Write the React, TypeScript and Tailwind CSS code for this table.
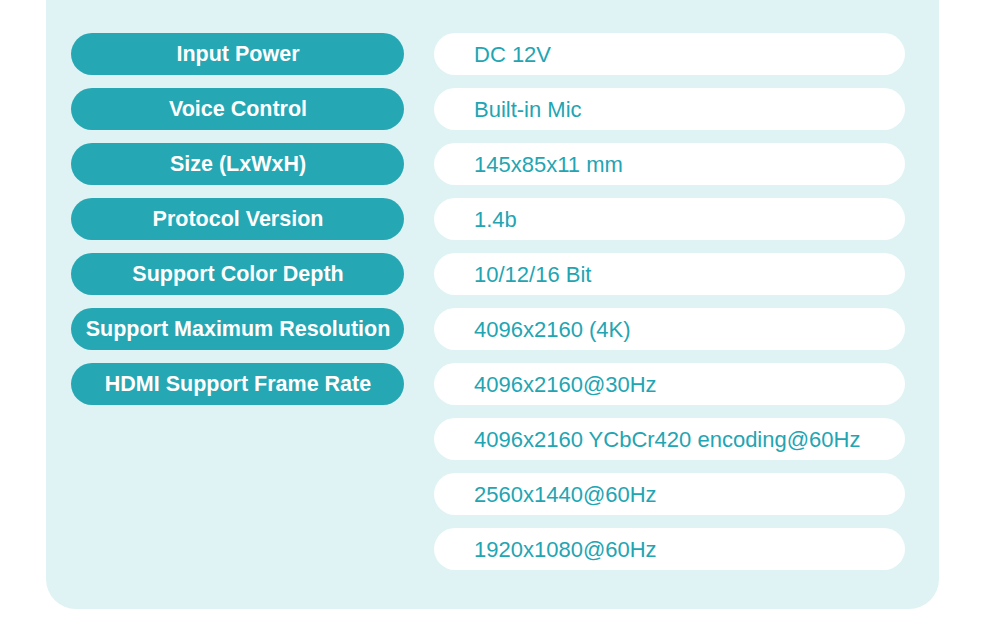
const specs = [
  'Input Power',
  'Voice Control',
  'Size (LxWxH)',
  'Protocol Version',
  'Support Color Depth',
  'Support Maximum Resolution',
  'HDMI Support Frame Rate',
];

const values = [
  'DC 12V',
  'Built-in Mic',
  '145x85x11 mm',
  '1.4b',
  '10/12/16 Bit',
  '4096x2160 (4K)',
  '4096x2160@30Hz',
  '4096x2160 YCbCr420 encoding@60Hz',
  '2560x1440@60Hz',
  '1920x1080@60Hz',
];

export default function App() {
  return (
    <div className="w-[985px] h-[627px] bg-white overflow-hidden" style={{ fontFamily: '"Liberation Sans", Arial, sans-serif' }}>
      <div className="ml-[46px] w-[893px] h-[609px] bg-[#dff3f4] rounded-b-[30px] pt-[33px] pl-[25px] flex gap-[30px]">
        {/* spec names */}
        <div className="flex flex-col gap-[13px] w-[333px]">
          {specs.map((s) => (
            <div
              key={s}
              className="h-[42px] rounded-full bg-[#26a7b4] text-white font-bold text-[21.5px] flex items-center justify-center pl-[1px]"
            >
              {s}
            </div>
          ))}
        </div>
        {/* values */}
        <div className="flex flex-col gap-[13px] w-[471px]">
          {values.map((v) => (
            <div
              key={v}
              className="h-[42px] rounded-full bg-white text-[#22a5b3] text-[22px] flex items-center pl-[40px]"
            >
              {v}
            </div>
          ))}
        </div>
      </div>
    </div>
  );
}
